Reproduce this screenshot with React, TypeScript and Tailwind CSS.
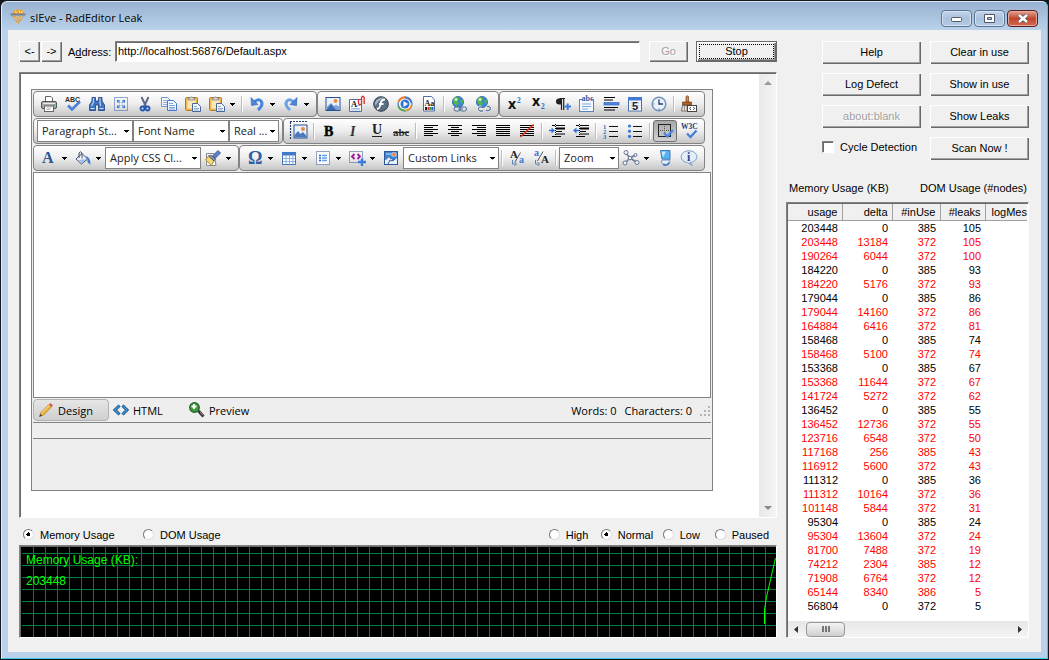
// App.tsx

import React, { ReactNode, useState } from 'react';

interface UsageRow {
    usage: number;
    delta: number;
    inUse: number;
    leaks: number;
}

const rows: UsageRow[] = [
    [203448, 0, 385, 105], [203448, 13184, 372, 105], [190264, 6044, 372, 100], [184220, 0, 385, 93],
    [184220, 5176, 372, 93], [179044, 0, 385, 86], [179044, 14160, 372, 86], [164884, 6416, 372, 81],
    [158468, 0, 385, 74], [158468, 5100, 372, 74], [153368, 0, 385, 67], [153368, 11644, 372, 67],
    [141724, 5272, 372, 62], [136452, 0, 385, 55], [136452, 12736, 372, 55], [123716, 6548, 372, 50],
    [117168, 256, 385, 43], [116912, 5600, 372, 43], [111312, 0, 385, 36], [111312, 10164, 372, 36],
    [101148, 5844, 372, 31], [95304, 0, 385, 24], [95304, 13604, 372, 24], [81700, 7488, 372, 19],
    [74212, 2304, 385, 12], [71908, 6764, 372, 12], [65144, 8340, 386, 5], [56804, 0, 372, 5],
].map(([usage, delta, inUse, leaks]) => ({ usage, delta, inUse, leaks }));

// 1px lines, two apart, used by the paragraph icons
const lines = (spans: number[][], color = '#000') =>
    spans.map(([x, w], i) => <rect key={i} x={x} y={2 + i * 2} width={w} height="1" fill={color} shapeRendering="crispEdges" />);

const picture = (
    <>
        <rect x="1" y="1.500" width="14" height="13" fill="#eaf3fd" stroke="#2b4f8c" />
        <path d="M1.500 14V11L6 7L9 10L11 8.500L14.500 11V14Z" fill="#7fa3d8" />
        <path d="M1.500 14L6 8L11 14Z" fill="#3d68ad" />
        <circle cx="10.500" cy="5" r="2" fill="#f08a3c" />
    </>
);

const globe = (
    <>
        <circle cx="7" cy="6" r="5.500" fill="#3f86d6" stroke="#22589c" strokeWidth="0.800" />
        <path d="M4 1.500Q7 0 8.500 2.500L6.500 5L8 7L5.500 10L3 7.500L1.800 4.500Z M9.500 4L11.800 3.500L12.300 6L10.500 8.500Z" fill="#4fb848" />
        <circle cx="5" cy="3.500" r="1.500" fill="#d4f6c0" />
    </>
);

const page = <path d="M2.500 0.500H10.500L13.500 4V15H2.500Z" fill="#fff" stroke="#51709e" />;

const clipboard = (
    <>
        <rect x="0.500" y="1.500" width="12" height="13" rx="1" fill="#efb851" stroke="#b37b22" />
        <rect x="2.500" y="4" width="8" height="8.500" fill="#fbe6b5" />
        <path d="M3.500 4V2H5Q6.500 -0.500 8 2H9.500V4Z" fill="#d8d8d8" stroke="#777" strokeWidth="0.700" />
        <path d="M7.500 7.500H12.500L15.500 10.500V15.500H7.500Z" fill="#f4f8ff" stroke="#46669c" />
        <path d="M9 10.500H12M9 12.500H14M9 14H14" stroke="#7894c4" strokeWidth="0.800" />
    </>
);

const serif = 'Liberation Serif, serif';
const sans = 'Liberation Sans, sans-serif';

const icons: Record<string, ReactNode> = {
    print: (
        <>
            <path d="M4.500 6V0.500H10L11.500 2V6" fill="#fff" stroke="#666" />
            <rect x="0.500" y="5.500" width="15" height="7" rx="1.500" fill="#a9a9ae" stroke="#55565c" />
            <path d="M2 7.500H14" stroke="#ececf0" />
            <rect x="3.500" y="10" width="9" height="5.500" fill="#fff" stroke="#666" />
            <path d="M5.500 12H10.500M5.500 13.500H9" stroke="#999" strokeWidth="0.700" />
            <rect x="12.500" y="8.500" width="1.500" height="1" fill="#4fb83c" />
        </>
    ),
    spell: (
        <>
            <text x="0" y="5.500" fontSize="7" fontWeight="bold" fontFamily={sans} fill="#333">ABC</text>
            <path d="M3 9.500L7 13.500L15 5.500" fill="none" stroke="#4c7fd9" strokeWidth="2.600" />
        </>
    ),
    find: (
        <>
            <path d="M3 1.500H6.500V5H9.500V1.500H13V5L15.500 9V14.500H9.500V9H6.500V14.500H0.500V9L3 5Z" fill="#3f73bf" stroke="#1f3f7c" strokeWidth="0.800" />
            <path d="M4.500 2V6L2.500 10M11 2V6L11.500 10" stroke="#b6d2f6" fill="none" strokeWidth="1.200" />
            <path d="M1.500 12.500H5.500M10.500 12.500H14.500" stroke="#cfe0f8" />
        </>
    ),
    selectAll: (
        <>
            <rect x="1.500" y="1.500" width="13" height="13" fill="none" stroke="#2f5da8" strokeDasharray="1 1" />
            <path d="M4 4H7L4 7ZM12 4V7L9 4ZM4 12V9L7 12ZM12 12H9L12 9Z" fill="#2d6fd0" />
            <path d="M5 5L7 7M11 5L9 7M5 11L7 9M11 11L9 9" stroke="#5f9be6" strokeWidth="1.500" />
        </>
    ),
    cut: (
        <>
            <path d="M4.500 1L9 10.500M11.500 1L7 10.500" stroke="#5a6884" strokeWidth="1.900" />
            <circle cx="5.500" cy="12.500" r="2" fill="none" stroke="#1f57b4" strokeWidth="1.800" />
            <circle cx="10.500" cy="12.500" r="2" fill="none" stroke="#1f57b4" strokeWidth="1.800" />
        </>
    ),
    copy: (
        <>
            <path d="M0.500 1.500H6.500L9.500 4.500V10.500H0.500Z" fill="#f2f7ff" stroke="#6b97d4" />
            <path d="M2 4.500H6M2 6.500H8M2 8.500H8" stroke="#8fb0e0" />
            <path d="M6.500 4.500H12.500L15.500 7.500V14.500H6.500Z" fill="#f2f7ff" stroke="#4478c4" />
            <path d="M8 7.500H12M8 9.500H14M8 11.500H14M8 13H14" stroke="#6f98d8" strokeWidth="0.900" />
        </>
    ),
    paste: clipboard,
    undo: (
        <>
            <path d="M5 6.500Q9 2 12 5Q15 9 9 14" fill="none" stroke="#4a86dc" strokeWidth="3" />
            <path d="M2 1.500L2.500 9.500L9 8.500Z" fill="#4a86dc" stroke="#2b62b4" strokeWidth="0.600" />
        </>
    ),
    redo: (
        <>
            <path d="M11 6.500Q7 2 4 5Q1 9 7 14" fill="none" stroke="#6aa2e6" strokeWidth="3" />
            <path d="M14 1.500L13.500 9.500L7 8.500Z" fill="#4a86dc" stroke="#2b62b4" strokeWidth="0.600" />
        </>
    ),
    image: picture,
    document: (
        <>
            <path d="M0.500 3.500H12.500V15.500H0.500Z" fill="#fff" stroke="#51709e" />
            <text x="2" y="11" fontSize="8.500" fontWeight="bold" fontFamily={serif} fill="#222">A</text>
            <path d="M2 12.500H11M2 14H11M8 9.500H11" stroke="#8ba6d0" strokeWidth="0.800" />
            <path d="M9.500 3V7.500Q11 10 12.500 7.500V1.500Q13.800 -1 15.200 1.500V8" fill="none" stroke="#d8302c" strokeWidth="1.300" />
        </>
    ),
    flash: (
        <>
            <circle cx="8" cy="8" r="7.300" fill="#5a6e84" stroke="#36424f" />
            <path d="M2 7Q4 1.500 11 1.500Q5 4 2.500 10Z" fill="#a9bccd" />
            <path d="M12 3.500Q8 3.500 7.500 8T4 13M6 8H10.500" fill="none" stroke="#fff" strokeWidth="1.800" />
        </>
    ),
    media: (
        <>
            <circle cx="8" cy="8" r="7" fill="#fff" stroke="#3b6cc4" strokeWidth="1.200" />
            <path d="M1.500 6Q3 1.500 8 1.500" stroke="#ef7a28" strokeWidth="2" fill="none" />
            <path d="M8 1.500Q13.500 2 14.500 7" stroke="#5575c8" strokeWidth="2" fill="none" />
            <path d="M1.500 10Q3 14.500 8 14.500" stroke="#4ca84a" strokeWidth="2" fill="none" />
            <path d="M14.500 9Q13 14 8 14.500" stroke="#e8a02c" strokeWidth="2" fill="none" />
            <circle cx="8" cy="8" r="4.500" fill="#2f72d4" />
            <path d="M6.500 5L11 8L6.500 11Z" fill="#fff" />
        </>
    ),
    template: (
        <>
            {page}
            <text x="3.500" y="9.500" fontSize="8" fontWeight="bold" fontFamily={serif} fill="#222">Aa</text>
            <path d="M4 12.500H6" stroke="#222" strokeWidth="3" />
            <path d="M6.500 12.500H8.500" stroke="#d8302c" strokeWidth="3" />
            <path d="M8.500 12.500H10.500" stroke="#35a03a" strokeWidth="3" />
            <path d="M10.500 12.500H12.500" stroke="#2e5fc8" strokeWidth="3" />
        </>
    ),
    link: (
        <>
            {globe}
            <rect x="3" y="11" width="6.500" height="4" rx="2" fill="#dbe5f2" stroke="#4f688c" />
            <rect x="9" y="11" width="6.500" height="4" rx="2" fill="#dbe5f2" stroke="#4f688c" />
            <path d="M7 13H12" stroke="#4f688c" />
        </>
    ),
    unlink: (
        <>
            {globe}
            <path d="M7 11H5Q1.500 13 5 15H8M12 10.500H14Q17 12.500 14 14.500H11" fill="none" stroke="#fff" strokeWidth="2.600" />
            <path d="M7 11H5Q1.500 13 5 15H8M12 10.500H14Q17 12.500 14 14.500H11" fill="none" stroke="#5e789e" strokeWidth="1.400" />
        </>
    ),
    sup: (
        <>
            <text x="1" y="13" fontSize="14" fontWeight="bold" fontFamily="Open Sans, sans-serif" fill="#111">x</text>
            <text x="10" y="7" fontSize="7.500" fontWeight="bold" fontFamily={serif} fill="#2e67c0">2</text>
        </>
    ),
    sub: (
        <>
            <text x="1" y="10" fontSize="14" fontWeight="bold" fontFamily="Open Sans, sans-serif" fill="#111">x</text>
            <text x="10" y="13" fontSize="7.500" fontWeight="bold" fontFamily={serif} fill="#2e67c0">2</text>
        </>
    ),
    paragraph: (
        <>
            <path d="M10 2.500H4.500M6.500 2.500V14M8.700 2.500V14" stroke="#222" fill="none" strokeWidth="1.200" />
            <path d="M6.500 2.500H4A2.900 2.900 0 0 0 4 8.500H6.500Z" fill="#222" />
            <path d="M9.500 10.500H16M12.700 7.500V14" stroke="#3c7be0" strokeWidth="2" />
        </>
    ),
    group: (
        <>
            <rect x="0.500" y="3.500" width="14" height="12" fill="#f4f9ff" stroke="#5c84bc" />
            <rect x="3" y="0" width="9" height="5" fill="#fff" />
            <text x="2.500" y="5" fontSize="8" fontWeight="bold" fontFamily={serif} fill="#2e5aa0">abc</text>
            <path d="M3 8H12M3 10.500H12M3 13H9" stroke="#7aa4dc" />
        </>
    ),
    rule: (
        <>
            <path d="M1 1.500H12M1 4H10M1 11.500H15M1 14H12" stroke="#000" />
            <rect x="1" y="6.500" width="15" height="2.500" fill="#4a86e0" stroke="#2a5fb8" strokeWidth="0.600" />
        </>
    ),
    date: (
        <>
            <rect x="1.500" y="2" width="13" height="13" fill="#fff" stroke="#4a6ea8" />
            <rect x="1" y="1" width="14" height="3.500" fill="#3f7ad0" />
            <path d="M2 7H14M2 9.500H14M2 12H14M5 5V15M11 5V15" stroke="#b4c8e8" strokeWidth="0.600" />
            <text x="5" y="14" fontSize="11" fontWeight="bold" fontFamily={sans} fill="#223">5</text>
        </>
    ),
    time: (
        <>
            <circle cx="8" cy="8" r="6.800" fill="#e8f1fc" stroke="#7892ba" strokeWidth="1.500" />
            <path d="M8 3.500V8H12" fill="none" stroke="#243c66" strokeWidth="1.300" />
            <path d="M8 12.500V14M2.500 8H3.500" stroke="#567" />
        </>
    ),
    stripFormat: (
        <>
            <path d="M5 0.500Q6.500 -1 7.500 0.500V6H5Z" fill="#d98546" stroke="#7c4318" strokeWidth="0.700" />
            <path d="M1.500 6H10.500V9H1.500Z" fill="#b0622c" stroke="#6c3c18" strokeWidth="0.700" />
            <path d="M1.500 9.500H10L9 15H0.500Z" fill="#e9e2d0" stroke="#555" strokeWidth="0.800" />
            <path d="M3.500 10V14.500M6 10V14.500" stroke="#777" strokeWidth="0.700" />
            <rect x="6.500" y="9.500" width="9" height="6" fill="#fff" stroke="#444" />
            <path d="M10 11L8.700 12.500L10 14M12.300 11L13.600 12.500L12.300 14" fill="none" stroke="#333" strokeWidth="0.900" />
        </>
    ),
    imageMap: (
        <>
            <path d="M-1 -1.500H16M-0.500 -1V16" fill="none" stroke="#2b3f6c" strokeWidth="1.200" strokeDasharray="2 1" />
            <rect x="3" y="2" width="13" height="13" fill="#eaf3fd" stroke="#2b4f8c" />
            <path d="M3.500 14.500V12L7 8L9.500 11L12 9L15.500 13V14.500Z" fill="#4d78bd" />
            <circle cx="12" cy="6" r="2" fill="#f08a3c" />
        </>
    ),
    bold: <text x="3" y="13" fontSize="14" fontWeight="bold" fontFamily={serif} stroke="#111" strokeWidth="0.500">B</text>,
    italic: <text x="5" y="13" fontSize="14" fontWeight="bold" fontStyle="italic" fontFamily={serif} fill="#333">I</text>,
    underline: (
        <>
            <text x="3" y="11" fontSize="14" fontWeight="bold" fontFamily={serif} fill="#222">U</text>
            <rect x="3" y="13" width="10" height="1" fill="#222" />
        </>
    ),
    strike: (
        <>
            <text x="0" y="13" fontSize="11" fontWeight="bold" fontFamily={serif} fill="#333">abc</text>
            <rect x="0" y="9" width="16" height="1" fill="#222" />
        </>
    ),
    left: lines([[1, 14], [1, 9], [1, 14], [1, 9], [1, 14], [1, 9]]),
    center: lines([[1, 14], [4, 8], [1, 14], [4, 8], [1, 14], [4, 8]]),
    right: lines([[1, 14], [6, 9], [1, 14], [6, 9], [1, 14], [6, 9]]),
    justify: lines([[1, 14], [1, 14], [1, 14], [1, 14], [1, 14], [1, 14]]),
    noAlign: (
        <>
            {lines([[1, 14], [1, 14], [1, 14], [1, 14], [1, 14], [1, 14]])}
            <path d="M1.500 14L14.500 1.500" stroke="#e0301c" strokeWidth="1.700" />
        </>
    ),
    indent: (
        <>
            <path d="M3 2.500H6M7 2.500H16M3 13.500H6M7 13.500H12M7 8.500H13M7 11H16" stroke="#000" />
            <path d="M7 5.500H16" stroke="#000" strokeWidth="2" />
            <path d="M6.500 1V15" stroke="#000" strokeDasharray="1 1" />
            <path d="M0 7.500H4" stroke="#3674d8" strokeWidth="1.500" />
            <path d="M2.500 4.500L6 7.500L2.500 10.500Z" fill="#3674d8" />
        </>
    ),
    outdent: (
        <>
            <path d="M3 2.500H6M7 2.500H16M3 13.500H6M7 13.500H12M7 8.500H13M7 11H16" stroke="#000" />
            <path d="M7 5.500H16" stroke="#000" strokeWidth="2" />
            <path d="M6.500 1V15" stroke="#000" strokeDasharray="1 1" />
            <path d="M2 7.500H6" stroke="#3674d8" strokeWidth="1.500" />
            <path d="M3.500 4.500L0 7.500L3.500 10.500Z" fill="#3674d8" />
        </>
    ),
    ordered: (
        <>
            <path d="M6 3.500H15M6 8.500H15M6 13.500H15" stroke="#111" />
            <text x="0" y="5.500" fontSize="6.500" fontWeight="bold" fontFamily={serif} fill="#2e67c0">1</text>
            <text x="0" y="10.500" fontSize="6.500" fontWeight="bold" fontFamily={serif} fill="#2e67c0">2</text>
            <text x="0" y="15.500" fontSize="6.500" fontWeight="bold" fontFamily={serif} fill="#2e67c0">3</text>
        </>
    ),
    bullets: (
        <>
            <path d="M6 3.500H15M6 8.500H15M6 13.500H15" stroke="#111" />
            <g fill="#3d78d4">
                <circle cx="2.500" cy="3" r="1.600" />
                <circle cx="2.500" cy="8.200" r="1.600" />
                <circle cx="2.500" cy="13.400" r="1.600" />
            </g>
        </>
    ),
    borders: (
        <>
            <rect x="1.500" y="1.500" width="12" height="12" fill="none" stroke="#222" />
            <path d="M7.500 3V13M3 7.500H13" stroke="#555" strokeDasharray="1 1" />
            <path d="M7 10L10.500 13.500L16 7" fill="none" stroke="#4c87e8" strokeWidth="2.400" />
        </>
    ),
    w3c: (
        <>
            <text x="0" y="5.500" fontSize="7.500" fontWeight="bold" fontFamily={serif} fill="#1f3c7a">W3C</text>
            <path d="M6 10.500L9.500 14L15.500 7.500" fill="none" stroke="#4c7fd9" strokeWidth="2.400" />
        </>
    ),
    foreColor: <text x="1" y="13" fontSize="16" fontWeight="bold" fontFamily={serif} fill="#2c5590">A</text>,
    backColor: (
        <>
            <path d="M1 9L7 3.500L12.500 9L6.500 14Z" fill="#f2f6fc" stroke="#40506c" />
            <path d="M2.500 10L11.500 9L6.500 13.200Z" fill="#9fc0ec" />
            <path d="M4 8V3Q5.500 0.500 7 3V8.500" fill="none" stroke="#40506c" />
            <path d="M10 6Q15.500 6.500 15.500 14.500Q11.500 13 12.500 9Z" fill="#3b7ad8" />
        </>
    ),
    formatPainter: (
        <>
            <path d="M1.500 3.500H9L11 15.500H1.500Z" fill="#fff" stroke="#8a8a8a" />
            <path d="M3.500 6L9 11L6.500 15.500L0.500 10Z" fill="#f3d777" stroke="#9a7a22" strokeWidth="0.800" />
            <path d="M6 5L10.500 9L9 11L3.500 6Z" fill="#8592a8" stroke="#454f62" strokeWidth="0.700" />
            <path d="M7.500 6L13 0.500L15.500 3L10 8.500Z" fill="#5a82c8" stroke="#27447c" strokeWidth="0.800" />
        </>
    ),
    symbol: <text x="1" y="14" fontSize="18" fontWeight="bold" fontFamily={serif} fill="#2e5f9e">Ω</text>,
    table: (
        <>
            <rect x="1.500" y="2.500" width="13" height="12" fill="#fff" stroke="#4b76b8" />
            <rect x="1" y="2" width="14" height="3.500" fill="#3f79cc" />
            <path d="M2 8.500H14M2 11.500H14M5 5V14M8.500 5V14M11.800 5V14" stroke="#8cb0e4" />
        </>
    ),
    formCode: (
        <>
            <rect x="1.500" y="1.500" width="13" height="13" fill="#f8fbff" stroke="#2f4f88" strokeDasharray="1 1" />
            <path d="M4 5.500H6M4 8H6M4 10.500H6" stroke="#2e67c0" strokeWidth="1.500" />
            <path d="M7 5.500H12M7 8H12M7 10.500H12" stroke="#6aa0ea" strokeWidth="1.500" />
        </>
    ),
    snippet: (
        <>
            <rect x="0.500" y="1.500" width="13" height="11" fill="none" stroke="#2f4f88" strokeDasharray="1 1" />
            <path d="M5.500 4L3 6.500L5.500 9M8.500 4L11 6.500L8.500 9" fill="none" stroke="#a0189c" strokeWidth="1.800" />
            <path d="M9 12H17M13 8.500V16" stroke="#3c7be0" strokeWidth="2.400" />
        </>
    ),
    imageMapEditor: (
        <>
            <rect x="1.500" y="1.500" width="13" height="13" fill="#3f83d4" stroke="#2b5a9c" />
            <path d="M2 10L6 6L10 11L14 8V14H2Z" fill="#e6f0fc" />
            <path d="M3 4H8M9 3H13V6H9Z" stroke="#cfe4fb" fill="none" />
            <path d="M5 14L7 10L9 11L12 9M2.500 10L6 6.500L8 9" stroke="#2b5a9c" fill="none" />
            <circle cx="11" cy="4.500" r="1.700" fill="#f08a3c" />
        </>
    ),
    toLower: (
        <>
            <text x="1" y="8" fontSize="11" fontWeight="bold" fontFamily={serif} fill="#222">A</text>
            <path d="M11.500 2.500L6 12" stroke="#444" strokeWidth="0.900" />
            <text x="10" y="13" fontSize="10" fontWeight="bold" fontFamily={serif} fill="#3d78d4">a</text>
            <path d="M3.500 10V14H6.500M5.500 12L7.500 14L5.500 16" fill="none" stroke="#5f80b4" />
        </>
    ),
    toUpper: (
        <>
            <text x="1" y="6" fontSize="10" fontWeight="bold" fontFamily={serif} fill="#3d78d4">a</text>
            <path d="M10 1.500L4.500 11" stroke="#444" strokeWidth="0.900" />
            <text x="8" y="13" fontSize="11" fontWeight="bold" fontFamily={serif} fill="#222">A</text>
            <path d="M2.500 10V14H5.500M4.500 12L6.500 14L4.500 16" fill="none" stroke="#5f80b4" />
        </>
    ),
    xhtml: (
        <>
            <path d="M2.500 2.500L7 8L2 13M7 8L14 12.500M7 8L12.500 5" fill="none" stroke="#667891" strokeWidth="1.500" />
            <g fill="#f2f6fb" stroke="#667891">
                <circle cx="3" cy="2.500" r="2" />
                <circle cx="2" cy="13" r="2" />
                <circle cx="14" cy="12.500" r="2" />
                <circle cx="12.500" cy="5" r="1.500" />
                <circle cx="7" cy="8" r="1.800" />
            </g>
        </>
    ),
    moduleManager: (
        <>
            <path d="M3.500 0.500H13V9.500L5 9Z" fill="#55b0f4" stroke="#3e7ab4" />
            <path d="M4.500 1.500H9L6 7.500Z" fill="#cbe8fd" />
            <path d="M5 10L12 10L13 11.500L10 14.500Q5 14.500 4.500 12.500Z" fill="#e9eff6" stroke="#6b94c8" />
            <path d="M6 14.500Q10 16.500 12.500 12.500" fill="none" stroke="#3a78cc" strokeWidth="1.500" />
        </>
    ),
    about: (
        <>
            <path d="M8 0.800C12.500 0.800 15.800 3.500 15.800 6.700S12.500 12.400 9 12.600L11.500 15.500L6.500 12.500C3 12.300 0.200 10 0.200 6.700S3.500 0.800 8 0.800Z" fill="#e4eefa" stroke="#7d98c2" />
            <text x="6" y="11" fontSize="12" fontWeight="bold" fontFamily={serif} fill="#274a90">i</text>
        </>
    ),
    design: (
        <>
            <path d="M1.500 14.500L3 10.500L11 2.500L13.500 5L5.500 13Z" fill="#f0b63c" stroke="#a86f1c" strokeWidth="0.700" />
            <path d="M3.500 11L11.500 3.200" stroke="#fbe39c" />
            <path d="M1.500 14.500L2.300 12L4 13.700Z" fill="#333" />
            <path d="M11 2.500L12.500 1L15 3.500L13.500 5Z" fill="#d8584c" />
        </>
    ),
    html: (
        <>
            <path d="M6.500 3.500L2 8L6.500 12.500M9.500 3.500L14 8L9.500 12.500" fill="none" stroke="#13497c" strokeWidth="3" />
            <path d="M6.200 3.800L2 8L6.200 12.200M9.800 3.800L14 8L9.800 12.200" fill="none" stroke="#3f9ee0" strokeWidth="1.400" />
        </>
    ),
    preview: (
        <>
            <path d="M9.500 9L14.500 14.500" stroke="#333" strokeWidth="3" />
            <path d="M11 10L14 13.500" stroke="#999" />
            <circle cx="5.500" cy="5.500" r="4.800" fill="#3f9a3c" stroke="#1e5e26" strokeWidth="1.200" />
            <path d="M2.500 4.500H7.500M5 2V7" stroke="#fff" strokeWidth="1.800" />
        </>
    ),
    sieve: (
        <>
            <path d="M2 6L4 2.500L6 3L8 0.500L10 2L12 1.500L14 6Z" fill="#f2a024" />
            <path d="M5 3.500L7 5M9 2.500L10 5M12 3L11.500 5" stroke="#fff0b0" />
            <path d="M0.500 6.500H15.500" stroke="#77808c" strokeWidth="1.800" />
            <path d="M2.500 8H13.500L11 12.500H5Z" fill="#d3c6a8" stroke="#9a9a96" strokeDasharray="1 1" />
            <path d="M4 8.500L11 12M11 8.500L5.500 12M6 13L9 15.500M10 13L8 15" stroke="#ee9a22" strokeDasharray="2 1" strokeWidth="1.400" />
        </>
    ),
};

const Icon: React.FC<{ name: string }> = ({ name }) => (
    <svg width="16" height="16" viewBox="0 0 16 16" className="shrink-0 overflow-visible" aria-hidden="true">{icons[name]}</svg>
);

const Arrow: React.FC = () => (
    <svg width="5" height="3" viewBox="0 0 5 3" className="shrink-0" shapeRendering="crispEdges" aria-hidden="true">
        <path d="M0 0H5V1H4V2H3V3H2V2H1V1H0Z" fill="#000" />
    </svg>
);

const Tool: React.FC<{ name: string; active?: boolean }> = ({ name, active }) => (
    <button
        aria-label={name}
        className={`flex h-[22px] w-6 shrink-0 items-center justify-center ${active ? 'rounded-[3px] border border-[#6e6e6e] bg-gradient-to-b from-[#a8a8a8] to-[#d0d0d0]' : ''}`}
    >
        <Icon name={name} />
    </button>
);

const SplitTool: React.FC<{ name: string }> = ({ name }) => (
    <button aria-label={name} className="flex h-[22px] w-[34px] shrink-0 items-center gap-1 pl-1">
        <Icon name={name} />
        <span className="pl-px"><Arrow /></span>
    </button>
);

const Separator: React.FC = () => (
    <div className="w-[6px] shrink-0 pl-[2px]">
        <div className="h-4 w-px bg-[#bdbdbd] shadow-[1px_0_#fff]" />
    </div>
);

const Dropdown: React.FC<{ label: string; width: string }> = ({ label, width }) => (
    <div className={`relative h-[22px] shrink-0 ${width}`}>
        <select aria-label={label} className="h-full w-full appearance-none border border-[#828282] bg-white pl-1 text-[#222]">
            <option>{label}</option>
        </select>
        <span className="pointer-events-none absolute top-1/2 right-1 flex -translate-y-1/2">
            <Arrow />
        </span>
    </div>
);

const ToolGroup: React.FC<{ children: ReactNode }> = ({ children }) => (
    <div className="flex h-[26px] items-center rounded-[4px] border border-[#828282] bg-gradient-to-b from-white via-[#ededed] to-[#c6c6c6] px-[3px]">
        {children}
    </div>
);

const bevel = 'bg-[#f0f0f0] shadow-[inset_1px_1px_#fff,inset_-1px_-1px_#696969,inset_-2px_-2px_#a0a0a0]';
const sunken = 'border border-t-[#828282] border-l-[#828282] border-r-white border-b-white shadow-[inset_1px_1px_#696969]';

const PushButton: React.FC<{ children: ReactNode; disabled?: boolean }> = ({ children, disabled }) => (
    <button disabled={disabled} className={`h-[23px] pb-[2px] disabled:text-[#a0a0a0] disabled:[text-shadow:1px_1px_#fff] ${bevel}`}>
        {children}
    </button>
);

interface RadioProps {
    group: string;
    label: string;
    value: string;
    onChange: (value: string) => void;
    width?: string;
}

const Radio: React.FC<RadioProps> = ({ group, label, value, onChange, width }) => (
    <label className={`flex items-center gap-[6px] ${width ?? ''}`}>
        <input
            type="radio"
            name={group}
            checked={value === label}
            onChange={() => onChange(label)}
            className="h-[11px] w-[11px] shrink-0 appearance-none rounded-full border border-t-[#777] border-r-[#ddd] border-b-[#ddd] border-l-[#777] bg-white checked:bg-[radial-gradient(circle,#000_2px,#fff_2px)]"
        />
        {label}
    </label>
);

const Editor: React.FC = () => (
    <div className="w-[682px] border border-[#828282] bg-[#eee] p-px font-['Open_Sans',sans-serif] text-[11px]">
        <div className="flex flex-col gap-px">
            <div className="flex">
                <ToolGroup>
                    <Tool name="print" />
                    <Tool name="spell" />
                    <Tool name="find" />
                    <Tool name="selectAll" />
                    <Tool name="cut" />
                    <Tool name="copy" />
                    <Tool name="paste" />
                    <SplitTool name="paste" />
                    <Separator />
                    <SplitTool name="undo" />
                    <SplitTool name="redo" />
                </ToolGroup>
                <ToolGroup>
                    <Tool name="image" />
                    <Tool name="document" />
                    <Tool name="flash" />
                    <Tool name="media" />
                    <Tool name="template" />
                    <Separator />
                    <Tool name="link" />
                    <Tool name="unlink" />
                </ToolGroup>
                <ToolGroup>
                    <Tool name="sup" />
                    <Tool name="sub" />
                    <Tool name="paragraph" />
                    <Tool name="group" />
                    <Tool name="rule" />
                    <Tool name="date" />
                    <Tool name="time" />
                    <Separator />
                    <Tool name="stripFormat" />
                </ToolGroup>
            </div>
            <div className="flex">
                <ToolGroup>
                    <Dropdown label="Paragraph St..." width="w-24" />
                    <Dropdown label="Font Name" width="w-24" />
                    <Dropdown label="Real ..." width="w-[50px]" />
                </ToolGroup>
                <ToolGroup>
                    <Tool name="imageMap" />
                    <Separator />
                    <Tool name="bold" />
                    <Tool name="italic" />
                    <Tool name="underline" />
                    <Tool name="strike" />
                    <Separator />
                    <Tool name="left" />
                    <Tool name="center" />
                    <Tool name="right" />
                    <Tool name="justify" />
                    <Tool name="noAlign" />
                    <Separator />
                    <Tool name="indent" />
                    <Tool name="outdent" />
                    <Separator />
                    <Tool name="ordered" />
                    <Tool name="bullets" />
                    <Separator />
                    <Tool name="borders" active />
                    <Tool name="w3c" />
                </ToolGroup>
            </div>
            <div className="flex">
                <ToolGroup>
                    <SplitTool name="foreColor" />
                    <SplitTool name="backColor" />
                    <Dropdown label="Apply CSS Cl..." width="w-24" />
                    <SplitTool name="formatPainter" />
                </ToolGroup>
                <ToolGroup>
                    <SplitTool name="symbol" />
                    <SplitTool name="table" />
                    <SplitTool name="formCode" />
                    <SplitTool name="snippet" />
                    <Tool name="imageMapEditor" />
                    <Dropdown label="Custom Links" width="w-24" />
                    <Separator />
                    <Tool name="toLower" />
                    <Tool name="toUpper" />
                    <Separator />
                    <Dropdown label="Zoom" width="w-[60px]" />
                    <SplitTool name="xhtml" />
                    <Tool name="moduleManager" />
                    <Tool name="about" />
                </ToolGroup>
            </div>
        </div>
        <textarea aria-label="Content" className="mt-px block h-[226px] w-full resize-none border border-[#828282] bg-white" />
        <div className="flex h-6 items-center">
            <button className="flex h-[22px] w-[76px] items-center gap-1 rounded-sm border border-[#b0b0b0] bg-gradient-to-b from-[#e6e6e6] to-[#cfcfcf] pl-1">
                <Icon name="design" />
                <span className="pt-px">Design</span>
            </button>
            <button className="flex h-[22px] w-[76px] items-center gap-1 pl-1">
                <Icon name="html" />
                <span className="pt-px">HTML</span>
            </button>
            <button className="flex h-[22px] w-[76px] items-center gap-1 pl-1">
                <Icon name="preview" />
                <span className="pt-px">Preview</span>
            </button>
            <div className="ml-auto flex items-center gap-2 pt-[2px]">
                <span>Words: 0</span>
                <span>Characters: 0</span>
                <svg width="11" height="11" viewBox="0 0 11 11" fill="#b4b4b4" shapeRendering="crispEdges" aria-hidden="true">
                    <path d="M8 0h2v2h-2zM8 4h2v2h-2zM8 8h2v2h-2zM4 4h2v2h-2zM4 8h2v2h-2zM0 8h2v2h-2z" />
                </svg>
            </div>
        </div>
        <div className="h-[17px] border-y border-[#828282]" />
        <div className="h-[50px]" />
    </div>
);

const MemoryGraph: React.FC = () => (
    <div className={`h-[93px] bg-black ${sunken}`}>
        <div className="ml-[2px] flex h-full justify-between bg-[linear-gradient(#008040_1px,transparent_1px),linear-gradient(90deg,#008040_1px,transparent_1px)] bg-[size:12px_12px] bg-[position:11px_7px]">
            <div className="flex flex-col gap-[5px] pt-[6px] pl-1 text-[12px] leading-4 text-[#00ff00]">
                <span>Memory Usage (KB):</span>
                <span>203448</span>
            </div>
            <svg width="14" height="91" viewBox="0 0 14 91" fill="none" aria-hidden="true">
                <path d="M2.500 78V64L4.500 51L13.500 12" stroke="#00ff00" />
            </svg>
        </div>
    </div>
);

const UsageTable: React.FC = () => (
    <div className={`mt-[7px] flex flex-1 flex-col bg-white ${sunken}`}>
        <div className="flex-1 overflow-hidden p-px">
            <table className="w-full table-fixed border-collapse text-right">
                <thead>
                    <tr className="h-4">
                        {['usage', 'delta', '#inUse', '#leaks', 'logMes'].map((name, i) => (
                            <th
                                key={name}
                                className={`overflow-hidden border-r border-b border-[#a0a0a0] bg-[#f0f0f0] p-0 leading-[14px] font-normal whitespace-nowrap last:border-r-0 last:pl-[6px] last:text-left ${i < 4 ? 'pr-1' : ''} ${['w-[54px]', 'w-[50px]', 'w-12', 'w-[45px]', ''][i]}`}
                            >
                                {name}
                            </th>
                        ))}
                    </tr>
                </thead>
                <tbody className="leading-[14px]">
                    {rows.map((row, index) => (
                        <tr key={index} className={row.delta > 0 ? 'text-[#ff0000]' : 'text-black'}>
                            <td className="p-0 pr-1">{row.usage}</td>
                            <td className="p-0 pr-1">{row.delta}</td>
                            <td className="p-0 pr-1">{row.inUse}</td>
                            <td className="p-0 pr-1">{row.leaks}</td>
                            <td className="p-0" />
                        </tr>
                    ))}
                </tbody>
            </table>
        </div>
        <div className="ml-px flex h-4 items-center bg-gradient-to-b from-[#e6e6e6] to-[#f4f4f4] px-[6px]">
            <svg width="4" height="7" viewBox="0 0 4 7" aria-hidden="true"><path d="M4 0V7L0 3.500Z" fill="#333" /></svg>
            <div className="ml-2 flex h-[15px] w-[39px] items-center justify-center gap-px rounded-sm border border-[#979797] bg-gradient-to-b from-[#f4f4f4] via-[#e2e2e2] to-[#cfcfcf]">
                <i className="h-[6px] w-[2px] bg-[#777]" />
                <i className="h-[6px] w-[2px] bg-[#777]" />
                <i className="h-[6px] w-[2px] bg-[#777]" />
            </div>
            <svg width="4" height="7" viewBox="0 0 4 7" className="ml-auto" aria-hidden="true"><path d="M0 0V7L4 3.500Z" fill="#333" /></svg>
        </div>
    </div>
);

const TitleBar: React.FC = () => (
    <div className="flex h-7 items-center gap-1 bg-gradient-to-b from-[#98b3d1] to-[#b9d1ea] pr-[9px] pl-2 font-['Open_Sans',sans-serif] text-[11px]">
        <Icon name="sieve" />
        <h1 className="flex-1 pt-1">sIEve - RadEditor Leak</h1>
        <div className="flex gap-[2px] pt-1">
            <button aria-label="Minimize" className="flex h-[17px] w-[31px] items-center justify-center rounded-sm border border-[#5c738f] bg-gradient-to-b from-[#c3d6ec] via-[#a9c1dc] to-[#b4cbe4] pt-[3px] shadow-[inset_0_0_0_1px_#d5e3f2]">
                <svg width="11" height="5" viewBox="0 0 11 5" aria-hidden="true"><rect x="0.500" y="0.500" width="10" height="4" rx="1" fill="#fff" stroke="#535666" /></svg>
            </button>
            <button aria-label="Maximize" className="flex h-[17px] w-[31px] items-center justify-center rounded-sm border border-[#5c738f] bg-gradient-to-b from-[#c3d6ec] via-[#a9c1dc] to-[#b4cbe4] shadow-[inset_0_0_0_1px_#d5e3f2]">
                <svg width="11" height="9" viewBox="0 0 11 9" aria-hidden="true"><path d="M0.500 0.500H10.500V8.500H0.500ZM3.500 3.500V5.500H7.500V3.500Z" fill="#fff" fillRule="evenodd" stroke="#535666" /></svg>
            </button>
            <button aria-label="Close" className="flex h-[17px] w-[31px] items-center justify-center rounded-sm border border-[#5a1a1e] bg-gradient-to-b from-[#e0a193] via-[#c4452c] to-[#cf6a50] shadow-[inset_0_0_0_1px_#e4aba0]">
                <svg width="12" height="9" viewBox="0 0 12 9" aria-hidden="true"><path d="M2 1L10 8M10 1L2 8" stroke="#535666" strokeWidth="4" /><path d="M2 1L10 8M10 1L2 8" stroke="#fff" strokeWidth="2.400" /></svg>
            </button>
        </div>
    </div>
);

const App: React.FC = () => {
    const [address, setAddress] = useState('http://localhost:56876/Default.aspx');
    const [graph, setGraph] = useState('Memory Usage');
    const [speed, setSpeed] = useState('Normal');

    return (
        <div className="flex min-h-screen bg-[#16161e] p-px font-['Liberation_Sans',sans-serif] text-[11px] leading-[14px] text-black">
            <div className="flex flex-1 flex-col overflow-hidden rounded-t-md border border-t-[#dbe7f4] border-r-[#3fc9e8] border-b-[#3fc9e8] border-l-[#e6eef8] bg-[#b9d1ea]">
                <TitleBar />
                <div className="mx-[6px] mb-[6px] flex flex-1 gap-[9px] bg-[#f0f0f0] pt-[11px] pr-3 pb-[14px] pl-[11px]">
                    <main className="flex min-w-0 flex-1 flex-col">
                        <div className="flex items-center">
                            <button className={`h-[21px] w-[21px] pb-[2px] ${bevel}`}>&lt;-</button>
                            <button className={`mr-[6px] ml-px h-[21px] w-[21px] pb-[2px] ${bevel}`}>-&gt;</button>
                            <label htmlFor="address" className="w-[47px]">A<u>d</u>dress:</label>
                            <input
                                id="address"
                                value={address}
                                onChange={(e) => setAddress(e.target.value)}
                                className={`h-[21px] min-w-0 flex-1 bg-white px-[2px] pb-[2px] outline-none ${sunken}`}
                            />
                            <button disabled className={`ml-[9px] h-[21px] w-[39px] pb-[2px] text-[#a0a0a0] [text-shadow:1px_1px_#fff] ${bevel}`}>Go</button>
                            <button className={`ml-2 h-[21px] w-[81px] border border-[#696969] p-[2px] ${bevel}`}>
                                <span className="block border border-dotted border-black pb-px leading-3">Stop</span>
                            </button>
                        </div>
                        <div className={`mt-[10px] flex flex-1 justify-between bg-white ${sunken}`}>
                            <div className="pt-4 pl-[11px]">
                                <Editor />
                            </div>
                            <div className="mt-px flex w-[17px] flex-col items-center justify-between bg-gradient-to-r from-[#e9e9e9] to-[#f4f4f4] py-[7px]">
                                <svg width="8" height="4" viewBox="0 0 8 4" aria-hidden="true"><path d="M0 4H8L4 0Z" fill="#999" /></svg>
                                <svg width="8" height="4" viewBox="0 0 8 4" aria-hidden="true"><path d="M0 0H8L4 4Z" fill="#888" /></svg>
                            </div>
                        </div>
                        <div className="flex h-[27px] items-center pt-[6px] pl-1">
                            <Radio group="graph" label="Memory Usage" value={graph} onChange={setGraph} width="w-[120px]" />
                            <Radio group="graph" label="DOM Usage" value={graph} onChange={setGraph} />
                            <div className="ml-auto flex pr-2">
                                <Radio group="speed" label="High" value={speed} onChange={setSpeed} width="w-[52px]" />
                                <Radio group="speed" label="Normal" value={speed} onChange={setSpeed} width="w-[62px]" />
                                <Radio group="speed" label="Low" value={speed} onChange={setSpeed} width="w-[52px]" />
                                <Radio group="speed" label="Paused" value={speed} onChange={setSpeed} />
                            </div>
                        </div>
                        <MemoryGraph />
                    </main>
                    <aside className="flex w-[243px] shrink-0 flex-col">
                        <div className="ml-9 grid grid-cols-2 gap-[9px]">
                            <PushButton>Help</PushButton>
                            <PushButton>Clear in use</PushButton>
                            <PushButton>Log Defect</PushButton>
                            <PushButton>Show in use</PushButton>
                            <PushButton disabled>about:blank</PushButton>
                            <PushButton>Show Leaks</PushButton>
                            <label className="flex items-center gap-[6px] pb-1 whitespace-nowrap">
                                <input type="checkbox" className={`h-3 w-3 shrink-0 appearance-none bg-white ${sunken}`} />
                                Cycle Detection
                            </label>
                            <PushButton>Scan Now !</PushButton>
                        </div>
                        <div className="mt-[21px] flex justify-between pr-[2px] pl-[3px]">
                            <span>Memory Usage (KB)</span>
                            <span>DOM Usage (#nodes)</span>
                        </div>
                        <UsageTable />
                    </aside>
                </div>
            </div>
        </div>
    );
};

export default App;
